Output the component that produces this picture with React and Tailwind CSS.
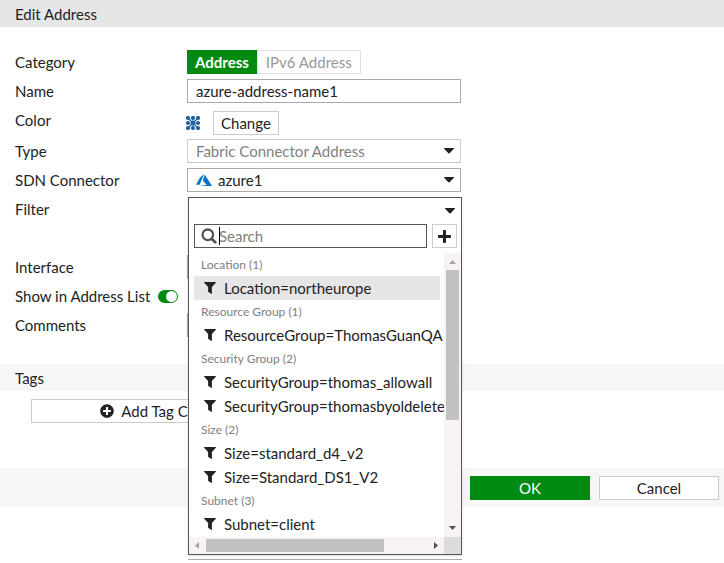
import React from "react";
import { FaPlusCircle } from "react-icons/fa";

const groups = [
  { name: "Location", count: 1, items: ["Location=northeurope"] },
  { name: "Resource Group", count: 1, items: ["ResourceGroup=ThomasGuanQA"] },
  {
    name: "Security Group",
    count: 2,
    items: ["SecurityGroup=thomas_allowall", "SecurityGroup=thomasbyoldelete"],
  },
  { name: "Size", count: 2, items: ["Size=standard_d4_v2", "Size=Standard_DS1_V2"] },
  { name: "Subnet", count: 3, items: ["Subnet=client"] },
];

const highlighted = "Location=northeurope";

function Caret({ className = "" }) {
  return (
    <svg viewBox="0 0 10 6" className={`w-[10px] h-[6px] fill-[#222] ${className}`}>
      <path d="M.5 0h9c.6 0 .7.5.4.8L5.600 5.200a.8.8 0 0 1-1.200 0L.1.8C-.2.5 0 0 .5 0z" />
    </svg>
  );
}

function SearchIcon({ className = "" }) {
  return (
    <svg
      viewBox="0 0 16 16"
      className={`w-4 h-4 fill-none stroke-[#555] ${className}`}
      strokeLinecap="round"
    >
      <circle cx="6.800" cy="6.800" r="5.300" strokeWidth="2.300" />
      <path d="M10.900 10.900l3.400 3.400" strokeWidth="2.800" />
    </svg>
  );
}

function PlusIcon() {
  return (
    <svg viewBox="0 0 13 13" className="w-[13px] h-[13px] fill-[#222]">
      <path d="M5.800 0h1.400q.8 0 .8.8V5h4.200q.8 0 .8.8v1.400q0 .8-.8.8H8v4.200q0 .8-.8.8H5.800q-.8 0-.8-.8V8H.8Q0 8 0 7.200V5.800Q0 5 .8 5H5V.8Q5 0 5.800 0z" />
    </svg>
  );
}

function FilterIcon() {
  return (
    <svg viewBox="0 0 12 12" className="w-3 h-3 shrink-0 fill-[#222]">
      <path d="M.5 0h11c.5 0 .6.5.3.8L7.900 4.900v6.500c0 .5-.5.7-.8.4L4.400 9.900a.6.6 0 0 1-.3-.5V4.900L.2.8C-.1.5 0 0 .5 0z" />
    </svg>
  );
}

function AzureIcon() {
  return (
    <svg viewBox="0 0 16 12" className="w-4 h-3 fill-[#0072c6]">
      <path d="M8.200 0 3.900 3.700 0 10.700h3.500zM8.900.7 6.700 6.500l4.100 4.600L3 12h13z" />
    </svg>
  );
}

function AddressIcon() {
  const spots = [2, 7, 12];
  return (
    <svg viewBox="0 0 14 14" className="w-[14px] h-[14px] fill-[#2463a0]">
      <path d="M2 2l10 10M12 2L2 12M7 2v10M2 7h10" stroke="#2463a0" strokeWidth="1.200" />
      {spots.map((y) =>
        spots.map((x) => <circle key={`${x}-${y}`} cx={x} cy={y} r="2.100" />)
      )}
    </svg>
  );
}

function Row({ label, htmlFor, children }) {
  return (
    <div className="flex items-center h-6">
      <label htmlFor={htmlFor} className="w-[172px] shrink-0">
        {label}
      </label>
      <div className="relative flex items-center flex-1 max-w-[274px] h-6">{children}</div>
    </div>
  );
}

function FilterDropdown() {
  return (
    <div className="absolute top-0 left-px w-full z-10">
      <div className="bg-white border border-[#555] shadow-sm">
        <button
          id="filter"
          type="button"
          aria-label="Filter"
          className="flex w-full h-[26px] items-center justify-end pr-[6px]"
        >
          <Caret />
        </button>

        <div className="flex gap-[5px] pl-[5px] pr-1">
          <div className="relative flex-1">
            <SearchIcon className="absolute left-[7px] top-1" />
            <span className="absolute left-[25px] top-[3px] w-px h-[18px] bg-black" />
            <input
              type="text"
              placeholder="Search"
              aria-label="Search"
              className="block w-full h-6 pl-6 border border-[#555] placeholder:text-[#808080] outline-none"
            />
          </div>
          <button
            type="button"
            aria-label="Create"
            className="flex w-[25px] h-6 items-center justify-center border border-[#ccc]"
          >
            <PlusIcon />
          </button>
        </div>

        <div className="flex mt-[5px]">
          <div className="flex-1 min-w-0 h-[284px] overflow-hidden pl-[5px] whitespace-nowrap">
            {groups.map((group) => (
              <div key={group.name}>
                <div className="h-[23px] pl-[7px] text-[12px] leading-6 text-[#808080]">
                  {group.name} ({group.count})
                </div>
                {group.items.map((item) => (
                  <button
                    key={item}
                    type="button"
                    className={`flex w-[calc(100%-4px)] h-6 items-center gap-2 pl-[10px] ${
                      item === highlighted ? "bg-[#e6e6e6]" : ""
                    }`}
                  >
                    <FilterIcon />
                    {item}
                  </button>
                ))}
              </div>
            ))}
          </div>
          <div className="flex flex-col items-center w-[17px] bg-[#f6f2f6]">
            <svg viewBox="0 0 17 17" className="w-[17px] h-[17px] fill-[#a3a3a3]">
              <path d="M5 11h7L8.500 7z" />
            </svg>
            <div className="w-[13px] h-[150px] bg-[#c4c1c4]" />
            <svg viewBox="0 0 17 17" className="w-[17px] h-[17px] mt-auto fill-[#505050]">
              <path d="M5 6h7l-3.500 4z" />
            </svg>
          </div>
        </div>

        <div className="flex h-[17px] items-center bg-[#f6f2f6]">
          <svg viewBox="0 0 17 17" className="w-[17px] h-[17px] fill-[#a3a3a3]">
            <path d="M10 5v7L6 8.500z" />
          </svg>
          <div className="w-[178px] h-[13px] bg-[#c4c1c4]" />
          <svg viewBox="0 0 17 17" className="w-[17px] h-[17px] ml-auto fill-[#505050]">
            <path d="M7 5v7l4-3.500z" />
          </svg>
          <div className="w-[17px] h-[17px] bg-[#dcdcdc]" />
        </div>
      </div>
      <div className="h-px mt-1 bg-[#aaa]" />
    </div>
  );
}

export default function App() {
  return (
    <form className="bg-white min-h-screen font-[Lato,sans-serif] text-[15px] leading-5 text-[#222]">
      <h1 className="h-[27px] px-[15px] leading-[29px] bg-[#e6e6e6]">Edit Address</h1>

      <div className="flex flex-col gap-[5px] px-[15px] pt-[23px]">
        <Row label="Category">
          <button type="button" className="h-6 px-2 bg-[#008a11] text-white font-bold">
            Address
          </button>
          <button type="button" className="h-6 px-2 border border-[#e0e0e0] text-[#999]">
            IPv6 Address
          </button>
        </Row>
        <Row label="Name" htmlFor="name">
          <input
            id="name"
            type="text"
            defaultValue="azure-address-name1"
            className="w-full h-6 px-2 border border-[#aaa]"
          />
        </Row>
        <div className="flex h-[26px]">
          <span className="w-[171px] shrink-0 leading-6">Color</span>
          <div className="flex items-center gap-[13px] h-6 mt-[3px]">
            <AddressIcon />
            <button type="button" className="h-6 px-[7px] border border-[#ccc]">
              Change
            </button>
          </div>
        </div>
        <Row label="Type" htmlFor="type">
          <select
            id="type"
            className="appearance-none w-full h-6 px-2 border border-[#ccc] text-[#808080]"
          >
            <option>Fabric Connector Address</option>
          </select>
          <Caret className="absolute right-[7px]" />
        </Row>
        <Row label="SDN Connector" htmlFor="connector">
          <select
            id="connector"
            className="appearance-none w-full h-6 pl-[30px] border border-[#aaa]"
          >
            <option>azure1</option>
          </select>
          <span className="absolute left-[9px]">
            <AzureIcon />
          </span>
          <Caret className="absolute right-[7px]" />
        </Row>
        <div className="h-[53px]">
          <Row label="Filter" htmlFor="filter">
            <FilterDropdown />
          </Row>
        </div>
        <Row label="Interface" htmlFor="interface">
          <select id="interface" className="appearance-none w-full h-6 border border-[#aaa]" />
        </Row>
        <div className="flex items-center h-6">
          <label htmlFor="show">Show in Address List</label>
          <input
            id="show"
            type="checkbox"
            role="switch"
            defaultChecked
            className="appearance-none flex items-center justify-end w-5 h-[13px] ml-2 p-px rounded-full bg-[#008a11] before:w-[11px] before:h-[11px] before:rounded-full before:bg-white"
          />
        </div>
        <Row label="Comments" htmlFor="comments">
          <input id="comments" type="text" className="w-full h-6 border border-[#aaa]" />
        </Row>
      </div>

      <h2 className="h-[27px] mt-[27px] px-[15px] leading-[29px] bg-[#f6f6f6]">Tags</h2>
      <div className="px-[31px] pt-2">
        <button
          type="button"
          className="flex w-full max-w-[276px] h-6 items-center justify-center gap-[7px] border border-[#ccc]"
        >
          <FaPlusCircle className="w-[14px] h-[14px]" />
          Add Tag Category
        </button>
      </div>

      <div className="flex items-center justify-end gap-[9px] h-[39px] mt-[45px] pr-[5px] bg-[#f6f6f6]">
        <button type="submit" className="w-[120px] h-6 bg-[#008a11] text-white">
          OK
        </button>
        <button type="button" className="w-[120px] h-6 bg-white border border-[#ccc]">
          Cancel
        </button>
      </div>
    </form>
  );
}
